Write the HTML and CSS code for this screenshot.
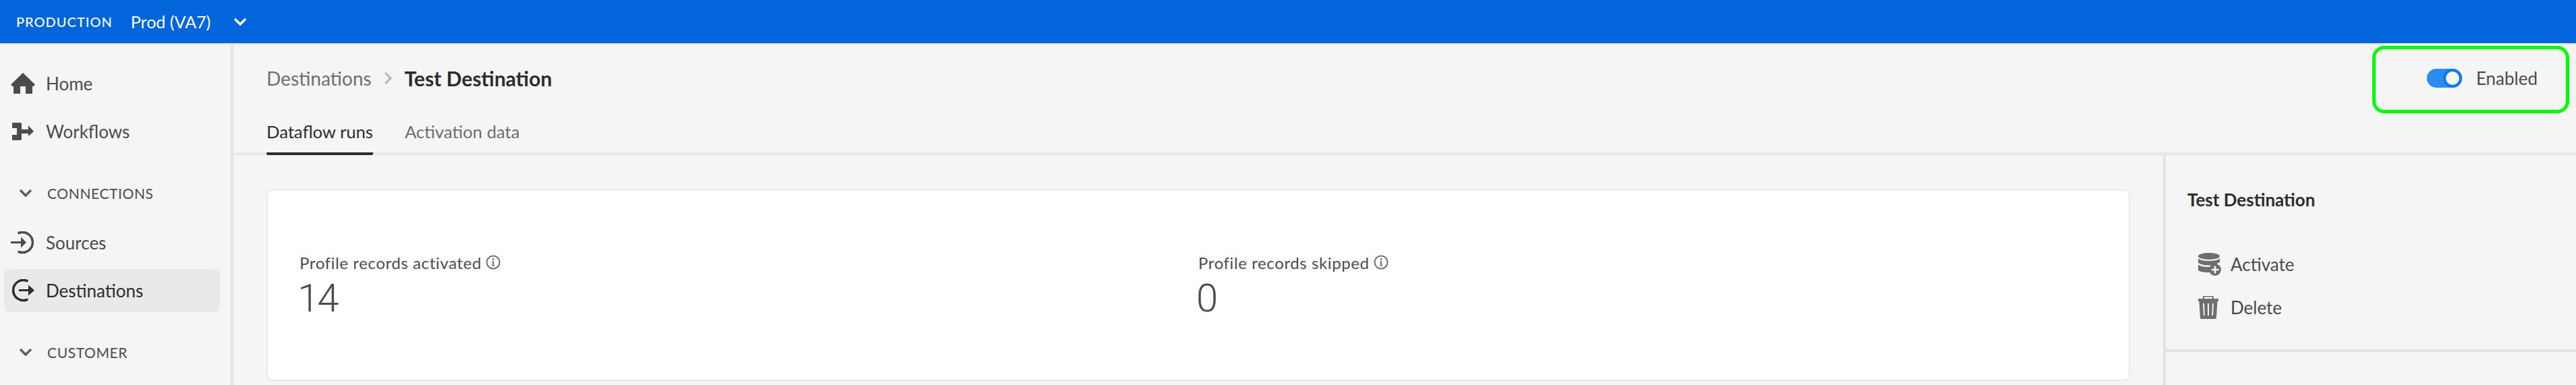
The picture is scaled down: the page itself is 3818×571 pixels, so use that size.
FILE: index.html
```html
<!DOCTYPE html>
<html lang="en">

<head>
    <meta charset="UTF-8">
    <meta name="viewport" content="width=device-width, initial-scale=1.0">
    <title>Test Destination</title>
    <link rel="stylesheet" href="styles.css">
</head>

<body>
    <div class="topbar">
        <span class="org">PRODUCTION</span>
        <span class="sandbox">Prod (VA7)</span>
        <svg class="topbar-chevron" width="20" height="12" viewBox="0 0 20 12"><path d="M2 2l8 8 8-8" fill="none" stroke="#fff" stroke-width="3.5"/></svg>
    </div>

    <div class="layout">
        <nav class="sidebar">
            <a class="nav-item">
                <svg class="nav-icon" width="36" height="32" viewBox="0 0 36 32"><path d="M18 0L36 17.5 33.5 20H32V31H22V20H14V31H4V20H2.5L0 17.5Z" fill="#4b4b4b"/></svg>
                Home
            </a>
            <a class="nav-item">
                <svg class="nav-icon" width="36" height="26" viewBox="0 0 36 26"><path d="M2 0H14a2 2 0 0 1 2 2V24a2 2 0 0 1-2 2H2V18H9V8H2ZM16 10H26V4L34 13 26 20V16H16Z" fill="#4b4b4b"/></svg>
                Workflows
            </a>

            <div class="nav-section">
                <svg width="20" height="12" viewBox="0 0 20 12"><path d="M2 2l8 8 8-8" fill="none" stroke="#5f5f5f" stroke-width="3.5"/></svg>
                CONNECTIONS
            </div>

            <a class="nav-item">
                <svg class="nav-icon" width="36" height="34" viewBox="0 0 36 34"><path d="M12 2.500A15 15 0 1 1 12 30.500" fill="none" stroke="#4b4b4b" stroke-width="3.500" stroke-linecap="round"/><path d="M0 15h15V8.500L23 16.500 15 24.500V18H0Z" fill="#4b4b4b"/></svg>
                Sources
            </a>
            <a class="nav-item active">
                <svg class="nav-icon" width="36" height="34" viewBox="0 0 36 34"><path d="M24 2.500A15 15 0 1 0 24 30.500" fill="none" stroke="#2c2c2c" stroke-width="3.500" stroke-linecap="round"/><path d="M12 15H26V8.500L35 16.500 26 24.500V18H12Z" fill="#2c2c2c"/></svg>
                Destinations
            </a>

            <div class="nav-section">
                <svg width="20" height="12" viewBox="0 0 20 12"><path d="M2 2l8 8 8-8" fill="none" stroke="#5f5f5f" stroke-width="3.5"/></svg>
                CUSTOMER
            </div>
        </nav>

        <div class="page">
            <div class="page-head">
                <div class="head-row">
                    <div class="crumbs">
                        <span class="crumb">Destinations</span>
                        <svg class="crumb-sep" width="12" height="20" viewBox="0 0 12 20"><path d="M2 2l8 8-8 8" fill="none" stroke="#b3b3b3" stroke-width="3"/></svg>
                        <span class="crumb-now">Test Destination</span>
                    </div>
                    <div class="enable">
                        <span class="toggle"><span class="thumb"></span></span>
                        <span>Enabled</span>
                    </div>
                </div>
                <div class="tabs">
                    <span class="tab selected">Dataflow runs</span>
                    <span class="tab">Activation data</span>
                </div>
            </div>

            <div class="page-body">
                <main class="main">
                    <div class="card">
                        <div class="stat">
                            <div class="stat-label">
                                Profile records activated
                                <svg width="22" height="22" viewBox="0 0 22 22"><circle cx="11" cy="11" r="9.500" fill="none" stroke="#6e6e6e" stroke-width="2"/><circle cx="11" cy="6.500" r="1.400" fill="#6e6e6e"/><path d="M9 9.500h3v6h1.200v1.300H8.800v-1.300H10V10.800H9Z" fill="#6e6e6e"/></svg>
                            </div>
                            <div class="stat-value">14</div>
                        </div>
                        <div class="stat">
                            <div class="stat-label">
                                Profile records skipped
                                <svg width="22" height="22" viewBox="0 0 22 22"><circle cx="11" cy="11" r="9.500" fill="none" stroke="#6e6e6e" stroke-width="2"/><circle cx="11" cy="6.500" r="1.400" fill="#6e6e6e"/><path d="M9 9.500h3v6h1.200v1.300H8.800v-1.300H10V10.800H9Z" fill="#6e6e6e"/></svg>
                            </div>
                            <div class="stat-value">0</div>
                        </div>
                    </div>
                </main>

                <aside class="panel">
                    <div class="panel-top">
                        <div class="panel-title">Test Destination</div>
                        <a class="action">
                            <svg width="36" height="34" viewBox="0 0 36 34"><ellipse cx="16" cy="5" rx="16" ry="5" fill="#6e6e6e"/><path d="M0 8.500C3 11 9 12 16 12s13-1 16-3.500V14c-2 .5-4 2-5 3-3 1-7 1.500-11 1.500-7 0-13-1.500-16-4ZM0 17.500c3 2.500 9 3.500 16 3.500 2 0 5-.2 7-.5-1 2-1.500 5-.5 8-2 .3-4.500.5-6.500.5-9 0-16-1.500-16-4Z" fill="#6e6e6e"/><circle cx="25" cy="25" r="9" fill="#6e6e6e"/><path d="M23.700 19.500h2.600v4.200h4.200v2.600h-4.200v4.200h-2.600v-4.200h-4.200v-2.600h4.200Z" fill="#f5f5f5"/></svg>
                            Activate
                        </a>
                        <a class="action">
                            <svg width="36" height="34" viewBox="0 0 36 34"><path d="M8 4V2a1.500 1.500 0 0 1 1.500-1.500h11A1.500 1.500 0 0 1 22 2v2" fill="none" stroke="#6e6e6e" stroke-width="2"/><path d="M0 4H30V8H28.500L27 32a2 2 0 0 1-2 2H5a2 2 0 0 1-2-2L1.500 8H0Z" fill="#6e6e6e"/><path d="M7 11h2l.8 18H8ZM14 11h2v18h-2ZM21 11h2l-1 18h-1.800Z" fill="#f5f5f5"/></svg>
                            Delete
                        </a>
                    </div>
                </aside>
            </div>
        </div>
    </div>

    <div class="callout"></div>
</body>

</html>
```

FILE: styles.css
```css
* {
    box-sizing: border-box;
}

html,
body {
    margin: 0;
    height: 571px;
    overflow: hidden;
}

body {
    position: relative;
    background-color: #f5f5f5;
    font-family: "Lato", "Noto Sans", sans-serif;
    color: #4b4b4b;
}

.topbar {
    display: flex;
    align-items: center;
    height: 64px;
    padding-left: 24px;
    background-color: #0265dc;
    color: white;
}

.org {
    font-size: 20px;
    letter-spacing: 1px;
    font-weight: 500;
}

.sandbox {
    margin-left: 27px;
    font-size: 25px;
}

.topbar-chevron {
    margin-left: 34px;
}

.layout {
    display: flex;
    height: 507px;
    border-top: 2px solid #e4e4e4;
}

.sidebar {
    width: 346px;
    flex-shrink: 0;
    padding: 26px 16px 0 6px;
    border-right: 4px solid #e4e4e4;
}

.nav-item {
    display: flex;
    align-items: center;
    gap: 16px;
    height: 64px;
    margin-bottom: 7px;
    padding-left: 10px;
    border-radius: 8px;
    font-size: 26px;
}

.nav-item.active {
    background-color: #e9e9e9;
    color: #2c2c2c;
}

.nav-icon {
    flex-shrink: 0;
}

.nav-section {
    display: flex;
    align-items: center;
    gap: 22px;
    height: 64px;
    margin-top: 27px;
    margin-bottom: 10px;
    padding-left: 22px;
    font-size: 21px;
    letter-spacing: .6px;
}

.page {
    flex: 1;
    display: flex;
    flex-direction: column;
    min-width: 0;
}

.page-head {
    height: 164px;
    padding-left: 49px;
    border-bottom: 4px solid #e8e8e8;
}

.head-row {
    display: flex;
    justify-content: space-between;
    align-items: center;
    height: 100px;
    padding-right: 57px;
}

.crumbs {
    display: flex;
    align-items: center;
    font-size: 28px;
}

.crumb {
    color: #6e6e6e;
}

.crumb-sep {
    margin: 0 18px 0 19px;
}

.crumb-now {
    color: #2c2c2c;
    font-size: 30px;
    font-weight: 700;
}

.enable {
    display: flex;
    align-items: center;
    gap: 21px;
    font-size: 26px;
}

.toggle {
    display: flex;
    justify-content: flex-end;
    width: 52px;
    height: 28px;
    border-radius: 14px;
    background-color: #2b8cf0;
}

.thumb {
    width: 28px;
    height: 28px;
    border: 4px solid #0a78fa;
    border-radius: 50%;
    background-color: #f8f8f8;
}

.tabs {
    display: flex;
    gap: 47px;
}

.tab {
    height: 64px;
    padding-top: 14px;
    font-size: 25.6px;
    color: #6e6e6e;
}

.tab.selected {
    color: #2c2c2c;
    border-bottom: 4px solid #2c2c2c;
    border-radius: 0 0 2px 2px;
}

.page-body {
    flex: 1;
    display: flex;
    min-height: 0;
}

.main {
    flex: 1;
    min-width: 0;
    padding: 51px 49px 0 49px;
}

.card {
    display: grid;
    grid-template-columns: 1fr 1fr;
    align-items: center;
    height: 284px;
    padding: 0 47px;
    border: 2px solid #eaeaea;
    border-radius: 8px;
    background-color: white;
}

.stat-label {
    display: flex;
    align-items: center;
    gap: 6px;
    font-size: 24px;
    letter-spacing: .6px;
}

.stat-value {
    margin-top: 8px;
    margin-left: -3px;
    font-family: "Roboto", "Lato", sans-serif;
    font-size: 58px;
    font-weight: 300;
    letter-spacing: -3px;
    line-height: 60px;
}

.panel {
    width: 612px;
    flex-shrink: 0;
    border-left: 4px solid #e4e4e4;
}

.panel-top {
    height: 292px;
    padding: 50px 32px 0 32px;
    border-bottom: 4px solid #e4e4e4;
}

.panel-title {
    height: 62px;
    margin-bottom: 33px;
    font-size: 26px;
    font-weight: 700;
    color: #2c2c2c;
}

.action {
    display: flex;
    align-items: center;
    gap: 12px;
    height: 34px;
    margin-bottom: 30px;
    padding-left: 16px;
    font-size: 26px;
}

.callout {
    position: absolute;
    top: 68px;
    left: 3516px;
    width: 292px;
    height: 100px;
    border: 5px solid #00ff00;
    border-radius: 18px;
}
```
